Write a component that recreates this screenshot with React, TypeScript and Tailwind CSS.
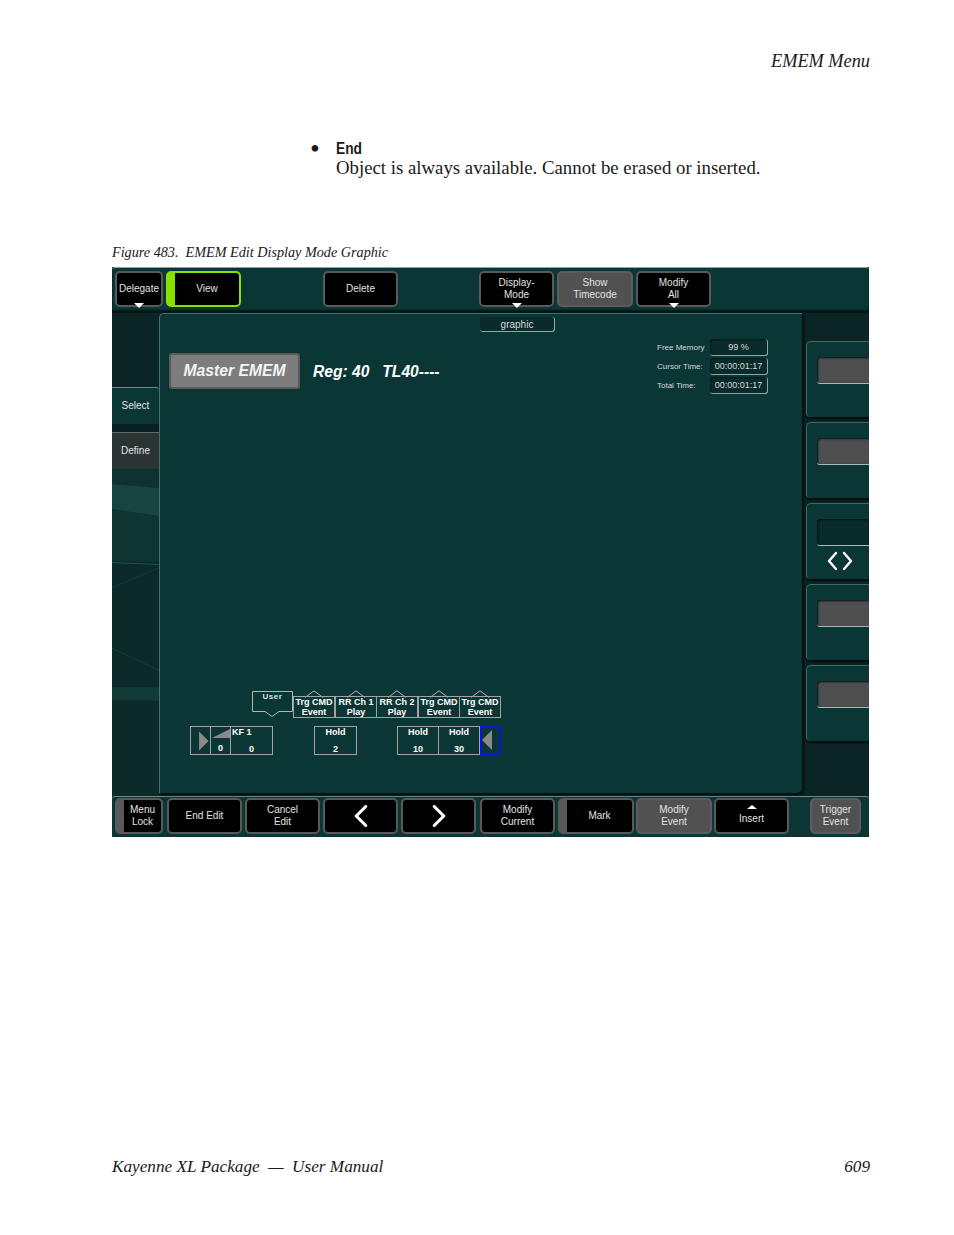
import { ChevronLeft, ChevronRight } from "lucide-react";

const UI = "font-['Liberation_Sans',sans-serif]";

type BtnProps = {
  lines: string[];
  w: string;
  variant?: "black" | "gray" | "green" | "lock";
  arrow?: "down" | "up";
  className?: string;
  children?: React.ReactNode;
};

// rounded touch-panel key
function Btn({ lines, w, variant = "black", arrow, className = "", children }: BtnProps) {
  const skin =
    variant === "gray"
      ? "bg-[#515151] border-[#5c5c5c]"
      : variant === "green"
        ? "bg-black border-[#8ae000] border-l-[9px]"
        : variant === "lock"
          ? "bg-black border-[#595959] border-l-[9px]"
          : "bg-black border-[#595959]";
  return (
    <div
      className={`relative flex h-[36px] shrink-0 flex-col items-center justify-center rounded-[5px] border-2 text-[10px] leading-[12px] text-[#e2e2e2] ${skin} ${w} ${className}`}
    >
      {arrow === "up" && <div className="mb-[4px] mt-[-2px] h-0 w-0 border-x-[5px] border-b-[4px] border-x-transparent border-b-white" />}
      {lines.map((l) => (
        <span key={l}>{l}</span>
      ))}
      {children}
      {arrow === "down" && (
        <div className="absolute bottom-[-3px] left-1/2 h-0 w-0 -translate-x-1/2 border-x-[5px] border-t-[5px] border-x-transparent border-t-white" />
      )}
    </div>
  );
}

function ReadOut({ value, w }: { value: string; w: string }) {
  return (
    <div
      className={`flex h-[17px] items-center justify-center rounded-[3px] border-r border-b border-[#8fa8a6] bg-[#0a2b2b] text-[9px] leading-none text-[#d8d8d8] shadow-[inset_1px_1px_1px_#041717] ${w}`}
    >
      {value}
    </div>
  );
}

function SidePanel({ gray = true, children }: { gray?: boolean; children?: React.ReactNode }) {
  return (
    <div className="flex h-[76px] flex-col rounded-tl-[5px] rounded-bl-[4px] border-t border-l border-[#3f6a67] bg-[#0a3735] pt-[15px] pl-[10px] shadow-[0_2px_2px_#020c0c]">
      <div className={`h-[27px] rounded-l-[3px] border-b border-[#a8bcba] shadow-[inset_1px_1px_2px_#041212] ${gray ? "bg-[#4f4f4f]" : "bg-[#0a2b2b]"}`} />
      {children}
    </div>
  );
}

function Node({ x, y, w, h, top, bottom, topClass = "" }: { x: number; y: number; w: number; h: number; top?: string; bottom?: string; topClass?: string }) {
  return (
    <div
      className="absolute flex flex-col items-center justify-between border border-[#a2a2a2] text-[9px] leading-[10px] font-bold text-white"
      style={{ left: x, top: y, width: w, height: h }}
    >
      <span className={topClass}>{top}</span>
      <span>{bottom}</span>
    </div>
  );
}

const EVENTS = [
  { x: 103, a: "Trg CMD", b: "Event" },
  { x: 145, a: "RR Ch 1", b: "Play" },
  { x: 186, a: "RR Ch 2", b: "Play" },
  { x: 228, a: "Trg CMD", b: "Event" },
  { x: 269, a: "Trg CMD", b: "Event" },
];

// event strip, positions are the content here
function Timeline() {
  return (
    <div className="absolute top-[376px] left-[30px] h-[66px] w-[312px]">
      <svg className="absolute top-0 left-[62px]" width="42" height="28" viewBox="0 0 42 28" fill="none" stroke="#b4b4b4">
        <path d="M.5 1.500h40v20H27l-7 5-7-5H.5z" />
      </svg>
      <div className="absolute top-[2px] left-[62px] w-[41px] text-center text-[8px] leading-[10px] font-bold tracking-[0.5px] text-[#e0e0e0]">User</div>
      {EVENTS.map((e) => (
        <div key={e.x} className="absolute top-0 w-[42px]" style={{ left: e.x }}>
          <svg className="absolute top-0 left-0" width="42" height="8" viewBox="0 0 42 8" fill="none" stroke="#b4b4b4">
            <path d="M12 7.500 21 .8l9 6.700" />
          </svg>
          <div className="absolute top-[6px] left-0 flex h-[22px] w-[42px] flex-col items-center border border-[#a2a2a2] text-[9px] leading-[10px] font-bold whitespace-nowrap text-white">
            <span>{e.a}</span>
            <span>{e.b}</span>
          </div>
        </div>
      ))}

      <div className="absolute top-[36px] left-0 flex h-[29px] w-[21px] items-center border border-[#a2a2a2]">
        <svg width="21" height="28" viewBox="0 0 21 28" className="ml-[-1px]">
          <path d="M9.500 4v20l10-10z" fill="#8a8a8a" />
        </svg>
      </div>
      <div className="absolute top-[36px] left-[20px] h-[29px] w-[21px] border border-[#a2a2a2] text-center text-[9px] font-bold text-white">
        <svg width="19" height="13" viewBox="0 0 19 13" className="block">
          <path d="M1 11 19 2v9z" fill="#8a8a8a" />
        </svg>
        <span className="mt-[3px] block leading-[10px]">0</span>
      </div>
      <Node x={40} y={36} w={43} h={29} top="KF 1" bottom="0" topClass="self-start pl-[1px]" />
      <Node x={124} y={36} w={43} h={29} top="Hold" bottom="2" />
      <Node x={207} y={36} w={42} h={29} top="Hold" bottom="10" />
      <Node x={248} y={36} w={42} h={29} top="Hold" bottom="30" />
      <div className="absolute top-[36px] left-[290px] flex h-[29px] w-[21px] items-center border-2 border-[#0a12e6]">
        <svg width="17" height="25" viewBox="0 0 17 25">
          <path d="M10 2v20L0 12z" fill="#8a8a8a" />
        </svg>
      </div>
    </div>
  );
}

function LeftTexture({ className = "" }: { className?: string }) {
  return (
    <svg className={`block w-full ${className}`} viewBox="0 0 47 325" preserveAspectRatio="none">
      <rect width="47" height="325" fill="#0b2a29" />
      <path d="M0 0H47V19L0 15z" fill="#0e3230" />
      <path d="M0 15 47 19V47L0 40z" fill="#164440" />
      <path d="M0 40 47 47V92H0z" fill="#0f3533" />
      <path d="M0 93 47 95" stroke="#1d5350" />
      <path d="M0 118 47 98" stroke="#123a38" />
      <path d="M0 178 47 200" stroke="#123a38" />
      <path d="M0 217H47V230H0z" fill="#113a37" />
    </svg>
  );
}

export default function App() {
  return (
    <div className="flex h-[1235px] w-[954px] flex-col bg-white pl-[112px] font-['Liberation_Serif',serif] text-[#1a1a1a]">
      <div className="mt-[50px] h-[22px] w-[758px] text-right text-[18.3px] leading-[22px] italic">EMEM Menu</div>

      <div className="mt-[67px] flex pl-[198px]">
        <div className="w-[26px] text-[28px] leading-[20px]">•</div>
        <div>
          <div className="origin-left scale-x-[0.81] font-['Liberation_Sans',sans-serif] text-[17px] leading-[19px] font-bold">End</div>
          <div className="text-[18.800px] leading-[20px]">Object is always available. Cannot be erased or inserted.</div>
        </div>
      </div>

      <div className="mt-[64px] h-[20px] text-[14.200px] leading-[20px] italic">Figure 483.&nbsp; EMEM Edit Display Mode Graphic</div>

      <div className={`mt-[5px] flex h-[570px] w-[757px] flex-col overflow-hidden bg-[#0b2524] ${UI}`}>
        {/* Top keys */}
        <div className="flex h-[46px] items-start gap-[3px] rounded-t-[3px] border-t border-[#8fa5a3] bg-[#0a3735] pt-[3px] pl-[3px] shadow-[inset_0_-3px_2px_#041515]">
          <Btn lines={["Delegate"]} w="w-[48px]" arrow="down" />
          <Btn lines={["View"]} w="w-[75px]" variant="green" />
          <Btn lines={["Delete"]} w="w-[75px]" className="ml-[79px]" />
          <Btn lines={["Display-", "Mode"]} w="w-[75px]" arrow="down" className="ml-[78px]" />
          <Btn lines={["Show", "Timecode"]} w="w-[76px]" variant="gray" />
          <Btn lines={["Modify", "All"]} w="w-[75px]" arrow="down" />
        </div>

        {/* Middle */}
        <div className="flex h-[483px]">
          <div className="flex w-[47px] shrink-0 flex-col">
            <div className="h-[74px] bg-[#0b2524]" />
            <div className="flex h-[37px] items-center justify-center rounded-tr-[3px] border-t border-[#6d8583] bg-[#0a3735] pb-[2px] text-[10px] text-[#e2e2e2]">Select</div>
            <div className="h-[8px] bg-[#08201f]" />
            <div className="flex h-[37px] items-center justify-center border-t border-[#5f6b6a] bg-[#2a3533] pb-[2px] text-[10px] text-[#e2e2e2]">Define</div>
            <LeftTexture className="flex-1" />
          </div>

          <div className="relative flex h-[480px] w-[643px] shrink-0 flex-col rounded-tl-[5px] rounded-br-[5px] border-t border-l border-[#45706d] bg-[#0a3735] shadow-[2px_2px_2px_#031010]">
            <div className="mt-[3px] ml-[320px] flex h-[15px] w-[75px] items-center justify-center rounded-[3px] border-r border-b border-[#8fa8a6] bg-[#0a2b2b] text-[10px] text-[#d8d8d8]">graphic</div>
            <div className="mt-[7px] flex items-start">
              <div className="mt-[14px] ml-[9px] flex h-[36px] w-[131px] items-center justify-center rounded-[3px] border-2 border-[#5a5a5a] bg-[#7d7d7d] text-[15.700px] font-bold text-[#f4f4f4] italic">Master EMEM</div>
              <div className="mt-[24px] ml-[13px] text-[15.600px] leading-[18px] font-bold whitespace-pre text-white italic">Reg: 40{"   "}TL40----</div>
              <div className="mr-[34px] ml-auto flex flex-col gap-[2px]">
                {[
                  ["Free Memory", "99 %"],
                  ["Cursor Time:", "00:00:01:17"],
                  ["Total Time:", "00:00:01:17"],
                ].map(([k, v]) => (
                  <div key={k} className="flex items-center">
                    <span className="w-[53px] text-[8px] text-[#d8d8d8]">{k}</span>
                    <ReadOut value={v} w="w-[58px]" />
                  </div>
                ))}
              </div>
            </div>
            <Timeline />
          </div>

          <div className="flex flex-1 flex-col gap-[5px] pt-[28px] pl-[4px]">
            <SidePanel />
            <SidePanel />
            <SidePanel gray={false}>
              <svg className="mt-[5px] ml-[10px]" width="26" height="20" viewBox="0 0 26 20" fill="none" stroke="white" strokeWidth="2.400" strokeLinecap="round" strokeLinejoin="round">
                <path d="M9 2 2 10l7 8M17 2l7 8-7 8" />
              </svg>
            </SidePanel>
            <SidePanel />
            <SidePanel />
          </div>
        </div>

        {/* Bottom keys */}
        <div className="flex h-[41px] items-start rounded-t-[3px] border-t border-[#6f8b89] bg-[#0a3735] pt-[1px] pl-[3px]">
          <Btn lines={["Menu", "Lock"]} w="w-[48px]" variant="lock" />
          <Btn lines={["End Edit"]} w="w-[75px]" className="ml-[4px]" />
          <Btn lines={["Cancel", "Edit"]} w="w-[75px]" className="ml-[3px]" />
          <Btn lines={[]} w="w-[75px]" className="ml-[3px]">
            <ChevronLeft size={38} color="white" strokeWidth={2} className="shrink-0" />
          </Btn>
          <Btn lines={[]} w="w-[75px]" className="ml-[3px]">
            <ChevronRight size={38} color="white" strokeWidth={2} className="shrink-0" />
          </Btn>
          <Btn lines={["Modify", "Current"]} w="w-[75px]" className="ml-[4px]" />
          <Btn lines={["Mark"]} w="w-[76px]" variant="lock" className="ml-[3px]" />
          <Btn lines={["Modify", "Event"]} w="w-[76px]" variant="gray" className="ml-[2px]" />
          <Btn lines={["Insert"]} w="w-[75px]" arrow="up" className="ml-[2px]" />
          <Btn lines={["Trigger", "Event"]} w="w-[51px]" variant="gray" className="ml-[21px]" />
        </div>
      </div>

      <div className="mt-[319px] flex h-[22px] w-[758px] justify-between text-[17.200px] leading-[22px] italic">
        <span>Kayenne XL Package&nbsp; — &nbsp;User Manual</span>
        <span>609</span>
      </div>
    </div>
  );
}
